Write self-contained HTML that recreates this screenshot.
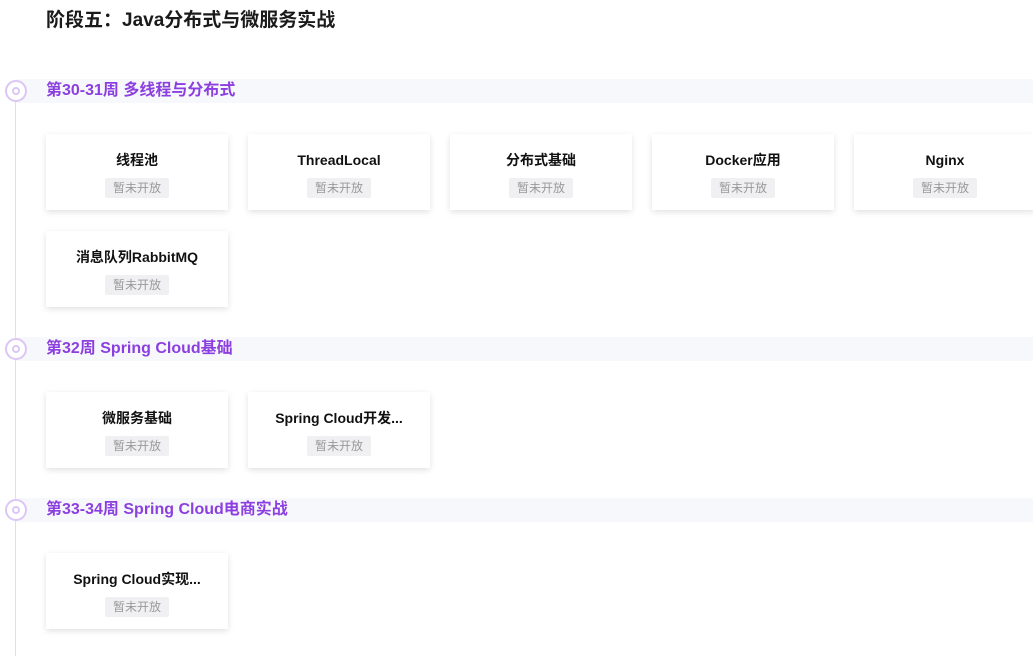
<!DOCTYPE html>
<html><head><meta charset="utf-8"><style>
body{margin:0;width:1033px;height:656px;overflow:hidden;background:#fff;font-family:"Liberation Sans","Noto Sans CJK SC",sans-serif;position:relative}
.t{position:absolute;left:46px;top:8px;font-size:19px;line-height:26px;font-weight:bold;color:#1a1a1a}
.line{position:absolute;left:15px;top:100px;width:1px;height:556px;background:#e0e0e0}
.h{position:absolute;left:8px;right:0;height:24px;background:#f7f8fb;border-radius:12px 0 0 12px}
.h span{position:absolute;left:38px;top:0;line-height:24px;font-size:16px;font-weight:bold;color:#8c3fe0;white-space:nowrap}
.c{position:absolute;width:22px;height:22px;left:5px;border-radius:50%;border:2px solid #dcc6f6;box-sizing:border-box;background:#fff}
.c:after{content:"";position:absolute;left:5px;top:5px;width:8px;height:8px;border-radius:50%;border:2px solid #dcc6f6;box-sizing:border-box}
.k{position:absolute;width:182px;height:76px;background:#fff;box-shadow:0 2px 6px rgba(0,0,0,.12)}
.k b{position:absolute;left:0;right:0;top:16px;line-height:20px;text-align:center;font-size:14px;color:#111;white-space:nowrap}
.k i{position:absolute;left:59px;width:64px;top:44px;height:20px;text-align:center;font-style:normal;font-size:12px;color:#999;background:#f0f0f2;line-height:20px;border-radius:2px}
</style></head><body>
<div class="t">阶段五：Java分布式与微服务实战</div>
<div class="line"></div>
<div class="h" style="top:79px"><span>第30-31周 多线程与分布式</span></div><div class="c" style="top:80px"></div>
<div class="k" style="left:46px;top:134px"><b>线程池</b><i>暂未开放</i></div>
<div class="k" style="left:248px;top:134px"><b>ThreadLocal</b><i>暂未开放</i></div>
<div class="k" style="left:450px;top:134px"><b>分布式基础</b><i>暂未开放</i></div>
<div class="k" style="left:652px;top:134px"><b>Docker应用</b><i>暂未开放</i></div>
<div class="k" style="left:854px;top:134px"><b>Nginx</b><i>暂未开放</i></div>
<div class="k" style="left:46px;top:231px"><b>消息队列RabbitMQ</b><i>暂未开放</i></div>
<div class="h" style="top:337px"><span>第32周 Spring Cloud基础</span></div><div class="c" style="top:338px"></div>
<div class="k" style="left:46px;top:392px"><b>微服务基础</b><i>暂未开放</i></div>
<div class="k" style="left:248px;top:392px"><b>Spring Cloud开发...</b><i>暂未开放</i></div>
<div class="h" style="top:498px"><span>第33-34周 Spring Cloud电商实战</span></div><div class="c" style="top:499px"></div>
<div class="k" style="left:46px;top:553px"><b>Spring Cloud实现...</b><i>暂未开放</i></div>
</body></html>
